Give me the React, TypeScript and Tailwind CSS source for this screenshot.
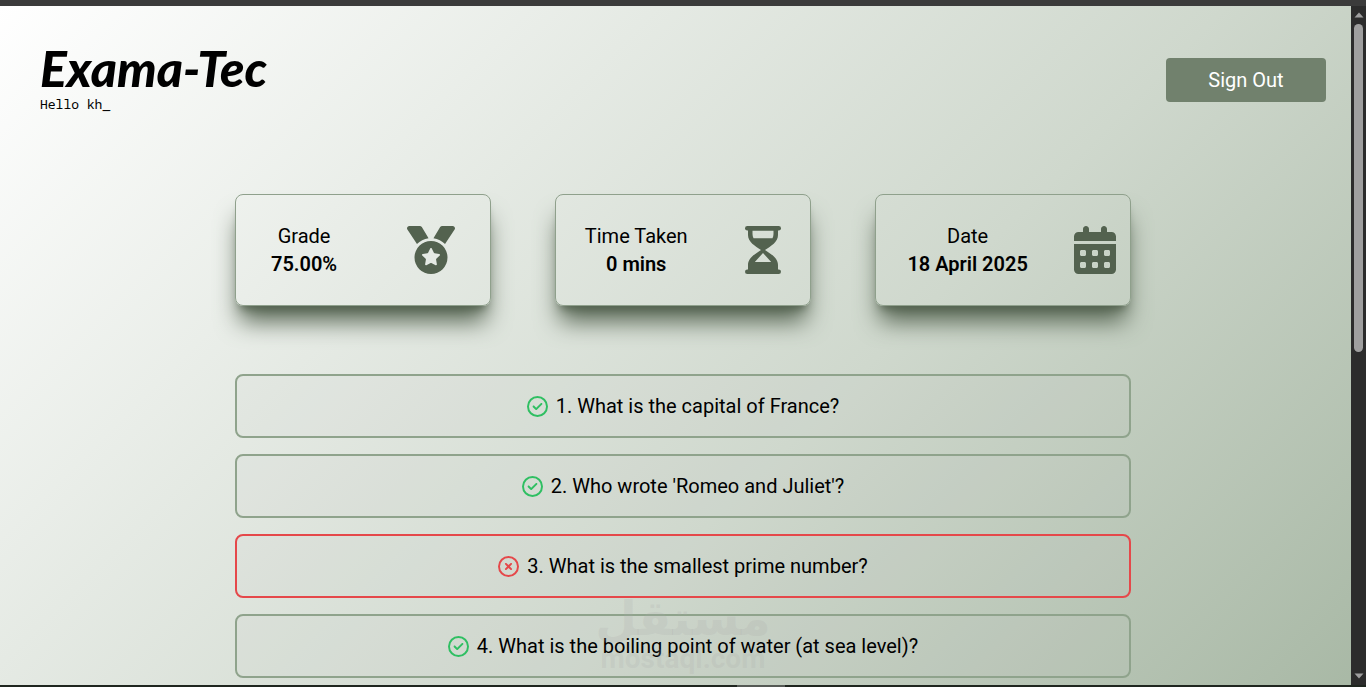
import React from 'react';
import { FaCalendarDays, FaMedal, FaRegCircleCheck, FaRegCircleXmark } from 'react-icons/fa6';

interface IconProps {
  className?: string;
}

interface StatCardProps {
  label: string;
  value: string;
  Icon: React.ComponentType<IconProps>;
  textClass?: string;
}

interface Question {
  text: string;
  correct: boolean;
}

const Hourglass: React.FC<IconProps> = ({ className }) => (
  <svg viewBox="0 0 36 48" fill="currentColor" className={className} aria-hidden="true">
    <rect width="36" height="4.6" rx="2.3" />
    <rect y="43.4" width="36" height="4.6" rx="2.3" />
    <path
      fillRule="evenodd"
      d="M3 3H33V9C33 16 26 20 20 24C26 28 33 32 33 39V45H3V39C3 32 10 28 16 24C10 20 3 16 3 9ZM7.5 4.4V8C7.5 9.6 7.9 10.9 8.5 12.2H27.500C28.1 10.9 28.5 9.6 28.5 8V4.4ZM18 27L9.8 36H26.2Z"
    />
  </svg>
);

const stats: StatCardProps[] = [
  { label: 'Grade', value: '75.00%', Icon: FaMedal },
  { label: 'Time Taken', value: '0 mins', Icon: Hourglass },
  { label: 'Date', value: '18 April 2025', Icon: FaCalendarDays, textClass: 'px-5' },
];

const questions: Question[] = [
  { text: 'What is the capital of France?', correct: true },
  { text: "Who wrote 'Romeo and Juliet'?", correct: true },
  { text: 'What is the smallest prime number?', correct: false },
  { text: 'What is the boiling point of water (at sea level)?', correct: true },
];

const Header: React.FC = () => (
  <header className="flex items-start justify-between px-10 pt-10">
    <div>
      <h1 className="font-['Lato',sans-serif] text-[50px] leading-11 font-black italic">Exama-Tec</h1>
      <p className="mt-1 font-['Noto_Sans_Mono','DejaVu_Sans_Mono',monospace] text-[13px] leading-5">Hello kh_</p>
    </div>
    <button type="button" className="mt-3 h-11 w-40 rounded-sm bg-[#71816d] text-xl text-white hover:bg-[#5f6e5b]">
      Sign Out
    </button>
  </header>
);

const StatCard: React.FC<StatCardProps> = ({ label, value, Icon, textClass = '' }) => (
  <div className="flex h-28 items-center justify-around rounded-lg border border-[#8fa08c] shadow-xl shadow-[#53624f]">
    <div className={`text-center text-xl leading-7 ${textClass}`}>
      <p>{label}</p>
      <p className="font-semibold">{value}</p>
    </div>
    <Icon className="h-12 w-auto text-[#53624f]" />
  </div>
);

const QuestionRow: React.FC<{ question: Question; number: number }> = ({ question, number }) => (
  <li>
    <button
      type="button"
      className={`flex h-16 w-full items-center justify-center gap-2 rounded-lg border-2 bg-[#c4c8c4]/10 text-xl ${
        question.correct ? 'border-[#8fa38c]' : 'border-[#e5484a]'
      }`}
    >
      {question.correct ? (
        <FaRegCircleCheck className="size-[21px] text-[#2fbf62]" />
      ) : (
        <FaRegCircleXmark className="size-[21px] text-[#e5484a]" />
      )}
      <span>
        {number}. {question.text}
      </span>
    </button>
  </li>
);

const Scrollbar: React.FC = () => (
  <div className="absolute inset-y-0 right-0 flex w-[15px] flex-col items-center bg-[#2c2c2c] py-1.5">
    <svg viewBox="0 0 10 6" className="h-1.5 w-2.5 shrink-0 fill-[#9f9f9f]">
      <path d="M5 0.5 9.5 5.5H0.5Z" />
    </svg>
    <div className="flex w-full flex-1 justify-center py-1.5">
      <div className="h-[51%] w-[9px] rounded-full bg-[#9f9f9f]" />
    </div>
    <svg viewBox="0 0 10 6" className="h-1.5 w-2.5 shrink-0 fill-[#9f9f9f]">
      <path d="M5 5.5 0.5 0.5H9.5Z" />
    </svg>
  </div>
);

const App: React.FC = () => {
  return (
    <div className="relative flex h-screen flex-col overflow-hidden bg-[#2c2c2c] font-['Roboto',sans-serif] text-black">
      <div className="h-1.5 shrink-0 bg-[#3b3b3b]" />
      <div className="relative min-h-0 flex-1 overflow-hidden bg-linear-135 from-white via-[#cfd8cd] via-60% to-[#a8b8a5]">
        <Header />
        <main className="mx-auto w-full max-w-4xl pt-20">
          <section className="grid grid-cols-3 gap-16">
            {stats.map((stat) => (
              <StatCard key={stat.label} {...stat} />
            ))}
          </section>
          <ul className="mt-17 flex flex-col gap-4">
            {questions.map((question, index) => (
              <QuestionRow key={question.text} question={question} number={index + 1} />
            ))}
          </ul>
        </main>
        <Scrollbar />
      </div>
      <div className="flex h-0.5 shrink-0 justify-center bg-[#1f261f]">
        <div className="ml-39 w-12 bg-[#555a55]" />
      </div>
      <div className="pointer-events-none absolute inset-x-0 bottom-4 text-center font-bold text-[#a9aaa9]/20">
        <p lang="ar" dir="rtl" className="font-['Noto_Sans','DejaVu_Sans',sans-serif] text-5xl leading-15">مستقل</p>
        <p className="text-[28px] leading-6">mostaql.com</p>
      </div>
    </div>
  );
};

export default App;
